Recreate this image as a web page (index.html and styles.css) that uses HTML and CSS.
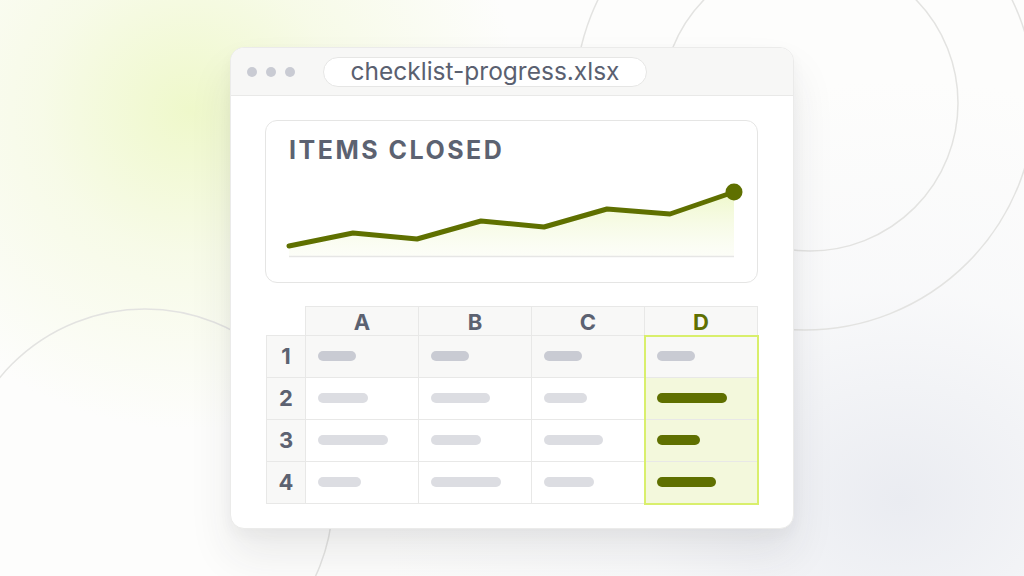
FILE: index.html
```html
<!DOCTYPE html>
<html lang="en">
<head>
<meta charset="utf-8">
<title>checklist-progress.xlsx</title>
<link rel="stylesheet" href="styles.css">
</head>
<body>
<svg class="backdrop" width="1024" height="576" viewBox="0 0 1024 576" aria-hidden="true">
  <circle cx="805" cy="100" r="230" />
  <circle cx="810" cy="103" r="148" />
  <circle cx="145" cy="497" r="188" />
</svg>
<main class="window">
  <header class="titlebar">
    <div class="dots"><span class="dot"></span><span class="dot"></span><span class="dot"></span></div>
    <div class="filename">checklist-progress.xlsx</div>
  </header>
  <section class="content">
    <div class="chart-card">
      <h2 class="chart-title">ITEMS CLOSED</h2>
      <svg class="chart" viewBox="266 164 491 117" width="491" height="117">
        <defs>
          <linearGradient id="fill" x1="0" y1="0" x2="0" y2="1">
            <stop offset="0" stop-color="#eef8c8" stop-opacity="0.95"/>
            <stop offset="1" stop-color="#f6fae6" stop-opacity="0.3"/>
          </linearGradient>
        </defs>
        <path class="area" d="M289 245 L353 232 L417 238 L481 220 L544 226 L607 208 L670 213 L734 191 L734 255 L289 255 Z"/>
        <line class="baseline" x1="289" y1="255.5" x2="734" y2="255.5"/>
        <polyline class="line" points="289,245 353,232 417,238 481,220 544,226 607,208 670,213 734,191"/>
        <circle class="end" cx="734" cy="191" r="8.5"/>
      </svg>
    </div>
    <div class="sheet">
      <div class="cell corner"></div>
      <div class="cell colhead">A</div>
      <div class="cell colhead">B</div>
      <div class="cell colhead">C</div>
      <div class="cell colhead active">D</div>

      <div class="cell rowhead">1</div>
      <div class="cell first"><span class="bar dark" style="width:38px"></span></div>
      <div class="cell first"><span class="bar dark" style="width:38px"></span></div>
      <div class="cell first"><span class="bar dark" style="width:38px"></span></div>
      <div class="cell first"><span class="bar dark" style="width:38px"></span></div>

      <div class="cell rowhead">2</div>
      <div class="cell"><span class="bar" style="width:50px"></span></div>
      <div class="cell"><span class="bar" style="width:59px"></span></div>
      <div class="cell"><span class="bar" style="width:43px"></span></div>
      <div class="cell hl"><span class="bar olive" style="width:70px"></span></div>

      <div class="cell rowhead">3</div>
      <div class="cell"><span class="bar" style="width:70px"></span></div>
      <div class="cell"><span class="bar" style="width:50px"></span></div>
      <div class="cell"><span class="bar" style="width:59px"></span></div>
      <div class="cell hl"><span class="bar olive" style="width:43px"></span></div>

      <div class="cell rowhead">4</div>
      <div class="cell"><span class="bar" style="width:43px"></span></div>
      <div class="cell"><span class="bar" style="width:70px"></span></div>
      <div class="cell"><span class="bar" style="width:50px"></span></div>
      <div class="cell hl"><span class="bar olive" style="width:59px"></span></div>

      <div class="selection"></div>
    </div>
  </section>
</main>
</body>
</html>
```

FILE: styles.css
```css
* { box-sizing: border-box; }

html, body {
  margin: 0;
  padding: 0;
}

body {
  width: 1024px;
  height: 576px;
  overflow: hidden;
  position: relative;
  display: flex;
  align-items: center;
  justify-content: center;
  font-family: Inter, "Noto Sans", "Liberation Sans", sans-serif;
  color: #5c6271;
  background:
    radial-gradient(ellipse 330px 320px at 190px 110px, rgba(238, 248, 200, 0.95) 0%, rgba(243, 249, 218, 0.6) 45%, rgba(255, 255, 255, 0) 100%),
    radial-gradient(ellipse 520px 420px at 900px 500px, rgba(232, 234, 240, 0.9) 0%, rgba(244, 245, 248, 0.5) 50%, rgba(255, 255, 255, 0) 100%),
    #fdfdfc;
}

.backdrop {
  position: absolute;
  left: 0;
  top: 0;
  z-index: 0;
}

.backdrop circle {
  fill: none;
  stroke: #e3e3e1;
  stroke-width: 1.5;
}

.window {
  position: relative;
  z-index: 1;
  width: 564px;
  height: 482px;
  margin-top: -1px;
  background: #ffffff;
  border: 1px solid #ebebea;
  border-radius: 14px;
  overflow: hidden;
  display: flex;
  flex-direction: column;
  box-shadow: 0 26px 44px rgba(40, 45, 60, 0.09), 0 6px 14px rgba(40, 45, 60, 0.04);
}

.titlebar {
  height: 48px;
  flex: none;
  background: #f7f7f6;
  border-bottom: 1px solid #e9e9e8;
  display: flex;
  align-items: center;
  padding-left: 16px;
  padding-top: 1px;
}

.dots {
  display: flex;
  gap: 9px;
}

.dot {
  width: 10px;
  height: 10px;
  border-radius: 50%;
  background: #c9cbd3;
}

.filename {
  margin-left: 28px;
  width: 324px;
  height: 30px;
  border-radius: 15px;
  background: #ffffff;
  border: 1px solid #e6e6e5;
  display: flex;
  align-items: center;
  justify-content: center;
  font-size: 24.5px;
  font-weight: 400;
  color: #5a6070;
  letter-spacing: 0;
  padding-bottom: 1px;
}

.content {
  padding: 24px 35px 0 34px;
  display: flex;
  flex-direction: column;
  gap: 23px;
}

.chart-card {
  width: 493px;
  height: 163px;
  border: 1px solid #e5e5e4;
  border-radius: 12px;
  display: flex;
  flex-direction: column;
}

.chart-title {
  margin: 0;
  padding: 14px 0 0 23px;
  height: 44px;
  line-height: 30px;
  font-size: 25px;
  font-weight: 700;
  letter-spacing: 2.5px;
  color: #5c6271;
}

.chart {
  display: block;
}

.chart .area { fill: url(#fill); }
.chart .baseline { stroke: #e6e6e5; stroke-width: 1.5; }
.chart .line {
  fill: none;
  stroke: #5f7000;
  stroke-width: 5;
  stroke-linejoin: round;
  stroke-linecap: round;
}
.chart .end { fill: #5f7000; }

.sheet {
  position: relative;
  display: grid;
  grid-template-columns: 40px repeat(4, 113px);
  grid-template-rows: 30px repeat(4, 42px);
  width: 492px;
  margin-left: 1px;
}

.cell {
  border-right: 1px solid #e8e8e7;
  border-bottom: 1px solid #e8e8e7;
  display: flex;
  align-items: center;
  padding-left: 12px;
  background: #ffffff;
}

.corner {
  background: transparent;
}

.colhead {
  border-top: 1px solid #e8e8e7;
  background: #f8f8f7;
  justify-content: center;
  padding-left: 0;
  font-size: 22px;
  font-weight: 700;
  color: #5c6271;
  line-height: 1;
  padding-top: 2px;
}

.colhead.active { color: #5f7000; }

.rowhead {
  border-left: 1px solid #e8e8e7;
  background: #f8f8f7;
  justify-content: center;
  padding-left: 0;
  font-size: 22px;
  font-weight: 700;
  color: #5c6271;
}

.first { background: #f8f8f7; }

.hl { background: #f3f8dc; }

.bar {
  display: block;
  height: 10px;
  border-radius: 5px;
  background: #dcdde2;
}

.bar.dark { background: #c9cbd3; }
.bar.olive { background: #5f7000; }

.selection {
  position: absolute;
  left: 378px;
  top: 29px;
  width: 115px;
  height: 170px;
  border: 2px solid #d9ef6c;
  pointer-events: none;
}
```
